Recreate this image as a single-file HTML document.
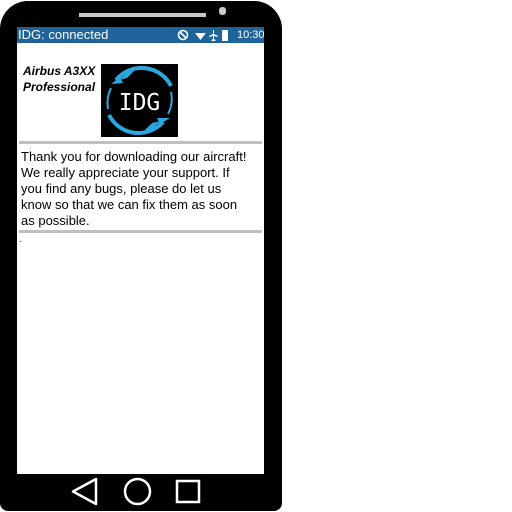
<!DOCTYPE html>
<html><head><style>
body{margin:0;width:512px;height:512px;background:#fff;position:relative;overflow:hidden;font-family:"Liberation Sans",Arial,sans-serif}
.phone{position:absolute;left:0;top:1px;width:282px;height:510px;background:#000;border-radius:28px 28px 8px 8px}
.screen{position:absolute;left:17px;top:27px;width:247px;height:447px;background:#fff}
.bar{position:absolute;left:0;top:0;width:247px;height:16px;background:#1e6399;color:#fff;font-size:13px;line-height:16px}
.hr{position:absolute;left:2px;width:243px;height:3px;background:#c0c0c0}
</style></head><body>
<div class="phone"></div>
<div style="position:absolute;left:79px;top:13px;width:127px;height:4px;background:#c8c8c8"></div>
<div style="position:absolute;left:219px;top:7px;width:7px;height:8px;background:#c8c8c8;border-radius:3px"></div>
<div class="screen">
 <div class="bar"><span style="position:absolute;left:1px">IDG: connected</span>
  <svg style="position:absolute;left:160px;top:2px" width="70" height="13" viewBox="0 0 70 13">
   <circle cx="6" cy="6" r="4.5" fill="none" stroke="#fff" stroke-width="1.6"/><line x1="3" y1="3" x2="9" y2="9" stroke="#fff" stroke-width="1.6"/>
   <path d="M18 4 L29 4 L23.5 11 Z" fill="#fff"/>
   <path d="M36 1 L37 1 L37 5 L41 7 L41 8 L37 7 L37 10 L38.5 11 L38.5 12 L34.5 12 L34.5 11 L36 10 L36 7 L32 8 L32 7 L36 5 Z" fill="#fff"/>
   <rect x="45" y="1" width="6" height="11" fill="#fff"/>
  </svg>
  <span style="position:absolute;left:220px;font-size:11px">10:30</span>
 </div>
 <div style="position:absolute;left:6px;top:36px;font-size:12px;font-weight:bold;font-style:italic;line-height:16px">Airbus A3XX<br>Professional</div>
 <div style="position:absolute;left:84px;top:37px;width:77px;height:73px;background:#000">
  <svg width="77" height="73" viewBox="0 0 77 73">
   <path d="M15 16 A33 33 0 0 1 70 22" fill="none" stroke="#29a8e0" stroke-width="4"/>
   <path d="M62 58 A33 33 0 0 1 8 51" fill="none" stroke="#29a8e0" stroke-width="4"/>
   <path d="M7 45 A33 33 0 0 1 10 24" fill="none" stroke="#29a8e0" stroke-width="2"/>
   <path d="M70 28 A33 33 0 0 1 67 50" fill="none" stroke="#29a8e0" stroke-width="2"/>
   <path d="M30 5 L38 2 L26 14 L18 16 Z M10 20 L19 13 L22 19 Z" fill="#29a8e0"/>
   <path d="M47 68 L39 71 L51 59 L60 57 Z M69 54 L59 60 L56 54 Z" fill="#29a8e0"/>
   <text x="38.5" y="46" font-family="DejaVu Sans Mono,monospace" font-size="23" fill="#fff" text-anchor="middle">IDG</text>
  </svg>
 </div>
 <div class="hr" style="top:114px"></div>
 <div style="position:absolute;left:4px;top:122px;font-size:13px;line-height:16px;color:#000">Thank you for downloading our aircraft!<br>We really appreciate your support. If<br>you find any bugs, please do let us<br>know so that we can fix them as soon<br>as possible.</div>
 <div class="hr" style="top:203px"></div>
 <div style="position:absolute;left:3px;top:214px;width:1px;height:1px;background:#886600"></div>
</div>
<svg style="position:absolute;left:0;top:474px" width="282" height="36">
 <path d="M96 5 L96 30 L73 17.5 Z" fill="none" stroke="#fff" stroke-width="2.5" stroke-linejoin="round"/>
 <circle cx="137.5" cy="17.5" r="12.5" fill="none" stroke="#fff" stroke-width="2.5"/>
 <rect x="177" y="7" width="22" height="21" fill="none" stroke="#fff" stroke-width="2.5"/>
</svg>
</body></html>
